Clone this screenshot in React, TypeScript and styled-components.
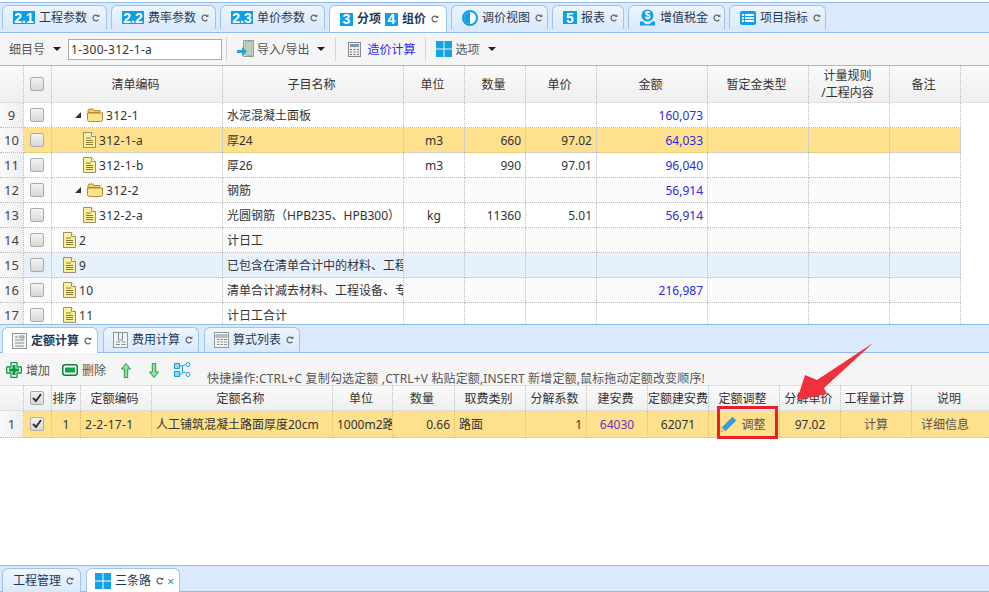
import React from "react";
import styled, { createGlobalStyle } from "styled-components";

const Global = createGlobalStyle`
  html, body { margin: 0; padding: 0; background: #fff; }
  body { font-family: "Noto Sans", "Noto Sans CJK SC", sans-serif; font-size: 12px; color: #333; }
  * { box-sizing: border-box; }
`;

const Page = styled.div`
  position: relative; width: 989px; height: 592px; overflow: hidden;
  display: flex; flex-direction: column; background: #fff;
`;
const TabStrip = styled.div<{ $h: number; $gap?: number }>`
  height: ${p => p.$h}px; flex: none; display: flex; gap: ${p => p.$gap ?? 4}px; padding: 2px 0 0 2px;
  background: #daeafc; border-top: 1px solid #8fbcec; border-bottom: 1px solid #8fbcec;
`;
const TopMargin = styled.div` height: 2px; flex: none; background: #fff; `;
const Tab = styled.div<{ $w: number; $active?: boolean; $h?: number; $pl?: number; $plain?: boolean }>`
  width: ${p => p.$w}px; flex: none; display: flex; align-items: center; gap: 4px; padding-left: ${p => p.$pl ?? 10}px;
  height: ${p => p.$h ?? 24}px; border: 1px solid #9cc4ee; border-bottom: none; border-radius: 6px 6px 0 0;
  background: ${p => (p.$active ? "#fff" : "linear-gradient(#eef5fd,#d9e9fb)")};
  color: #1f3a58; font-weight: ${p => (p.$active && !p.$plain ? 700 : 400)}; white-space: nowrap; line-height: 14px;
`;
const Badge = styled.span<{ $w?: number }>`
  display: inline-flex; align-items: center; justify-content: center; flex: none;
  width: ${p => p.$w ?? 13}px; height: 13px; background: #0ea0e4; color: #fff;
  font: 700 14px "Liberation Sans", sans-serif;
`;
const Toolbar = styled.div<{ $h: number }>`
  height: ${p => p.$h}px; flex: none; display: flex; align-items: center; background: #f5f5f5; color: #555;
  border-bottom: 1px solid #8fbcec;
`;
const Label = styled.span<{ $ml?: number; $color?: string }>`
  margin-left: ${p => p.$ml ?? 0}px; color: ${p => p.$color ?? "#555"}; white-space: nowrap; flex: none;
`;
const Caret = styled.span<{ $ml: number }>`
  margin-left: ${p => p.$ml}px; width: 0; height: 0; flex: none;
  border-left: 4px solid transparent; border-right: 4px solid transparent; border-top: 4px solid #222;
`;
const CodeInput = styled.div`
  margin-left: 7px; width: 154px; height: 21px; flex: none; border: 1px solid #aaa; background: #fff;
  padding-left: 2px; line-height: 19px; color: #333; font-size: 12px; letter-spacing: .3px;
`;
const Sep = styled.span<{ $ml: number }>`
  margin-left: ${p => p.$ml}px; width: 1px; height: 24px; background: #d4d4d4; flex: none;
`;
const IconSlot = styled.span<{ $ml: number }>`
  margin-left: ${p => p.$ml}px; display: inline-flex; flex: none;
`;
const GridBox = styled.div<{ $h: number }>`
  height: ${p => p.$h}px; flex: none; overflow: hidden;
`;
const Table = styled.table`
  table-layout: fixed; border-collapse: separate; border-spacing: 0; width: 989px; font-size: 12px;
`;
const Col = styled.col<{ $w: number }>` width: ${p => p.$w}px; `;
const Th = styled.th<{ $h: number; $bare?: boolean }>`
  height: ${p => p.$h}px; padding: 0 3px 0 0; font-weight: 400; color: #333; text-align: center; line-height: 17px;
  background: linear-gradient(#fafafa, #efefef);
  border-bottom: 1px solid #ddd; border-right: ${p => (p.$bare ? "none" : "1px dotted #bbb")}; white-space: nowrap; overflow: hidden;
`;
const Td = styled.td<{ $h: number; $bg?: string; $align?: string; $color?: string; $bare?: boolean }>`
  height: ${p => p.$h}px; padding: 0 4px; background: ${p => p.$bg ?? "#fff"};
  text-align: ${p => p.$align ?? "left"}; color: ${p => p.$color ?? "#333"};
  border-right: ${p => (p.$bare ? "none" : "1px dotted #bbb")}; border-bottom: ${p => (p.$bare ? "none" : "1px dotted #bbb")};
  white-space: nowrap; overflow: hidden;
`;
const NumTd = styled(Td)`
  background: linear-gradient(90deg,#fafafa,#eeeeee); text-align: center; padding: 0; font-size: 13px; color: #444;
`;
const CheckTd = styled(Td)` padding: 0 0 0 6px; `;
const InfoTd = styled(Td)` padding: 0 0 0 9px; border-right: none; `;
const CodeText = styled.span` letter-spacing: .3px; `;
const Check = styled.span`
  display: block; width: 14px; height: 14px; border: 1px solid #aaa; border-radius: 2px;
  background: linear-gradient(#f4f4f4,#d8d8d8); position: relative;
`;
const Tree = styled.div<{ $pl: number }>`
  display: flex; align-items: center; padding-left: ${p => p.$pl}px; gap: 3px; height: 16px;
`;
const Arrowhead = styled.span`
  width: 0; height: 0; border-left: 6px solid transparent; border-bottom: 6px solid #333; margin-right: 3px; flex: none;
`;
const HintRow = styled(Toolbar)` border-bottom: 1px solid #ddd; padding-top: 2px; position: relative; `;
const Hint = styled.span`
  position: absolute; left: 207px; top: 18px; color: #555; white-space: nowrap; line-height: 16px; font-size: 12px; letter-spacing: .15px;
`;
const Blank = styled.div` flex: 1; background: #fff; `;
const AdjustCell = styled.div` display: flex; align-items: center; justify-content: center; gap: 4px; color: #555; padding-right: 2px; `;
const Mark = styled.div`
  position: absolute; left: 717px; top: 406px; width: 61px; height: 33px; border: 3px solid #e8202a; pointer-events: none;
`;
const ArrowOverlay = styled.svg` position: absolute; left: 0; top: 0; pointer-events: none; `;
const TabClose = styled.span` color: #4f7fb5; font-size: 13px; margin-left: -1px; line-height: 12px; `;
const Ico = styled.svg` flex: none; `;
const RefreshIco = styled(Ico)` margin-left: 1px; `;
const DownIco = styled(Ico)<{ $down?: boolean }>` transform: ${p => (p.$down ? "rotate(180deg)" : "none")}; `;
const HeadCheck = styled.div` padding-left: 6px; `;
const Tick = styled.svg` position: absolute; left: 1px; top: 1px; `;

const Refresh = () => (
  <RefreshIco width="8" height="8" viewBox="0 0 8 8">
    <path d="M6.3 5.6A2.9 2.9 0 1 1 5.9 1.8" fill="none" stroke="#666" strokeWidth="1.3" />
    <path d="M4.4 2.9h3v-2.6z" fill="#666" />
  </RefreshIco>
);
const Note = () => (
  <Ico width="13" height="16" viewBox="0 0 13 16">
    <path d="M.5.5h8l4 4v11H.5z" fill="#fdf09a" stroke="#9a8f70" />
    <path d="M8.5.5v4h4" fill="#fff" stroke="#9a8f70" />
    <path d="M3 6h5M3 8.5h7M3 10.5h7M3 12.5h7" stroke="#8a7a3a" />
  </Ico>
);
const Folder = () => (
  <Ico width="16" height="14" viewBox="0 0 16 14">
    <path d="M1 2.5l1-1.5h4l1 1.5h6v2H1z" fill="#f3cd63" stroke="#b88a2a" />
    <path d="M.5 5h15v6.5a2 2 0 0 1-2 2h-11a2 2 0 0 1-2-2z" fill="#fbe38a" stroke="#b88a2a" />
  </Ico>
);
const Win = () => (
  <Ico width="16" height="16" viewBox="0 0 16 16">
    <path d="M0 0h7.5v7.5H0zM8.5 0H16v7.5H8.5zM0 8.5h7.5V16H0zM8.5 8.5H16V16H8.5z" fill="#10a3e6" />
  </Ico>
);
const HalfCircle = () => (
  <Ico width="16" height="16" viewBox="0 0 16 16">
    <circle cx="8" cy="8" r="7" fill="#fff" stroke="#0ea0e4" strokeWidth="2" />
    <path d="M8 2a6 6 0 0 0 0 12z" fill="#0ea0e4" />
    <path d="M8 3.5a4.5 4.5 0 0 1 0 9z" fill="#fff" />
  </Ico>
);
const Coin = () => (
  <Ico width="17" height="17" viewBox="0 0 17 17">
    <circle cx="8.5" cy="6.5" r="6" fill="#0ea0e4" />
    <text x="8.5" y="10" textAnchor="middle" fontSize="10" fontWeight="700" fill="#fff" fontFamily="Liberation Sans">$</text>
    <path d="M1 12.5h3a5 5 0 0 0 9 0h3v4H1z" fill="#0ea0e4" />
  </Ico>
);
const ListIcon = () => (
  <Ico width="16" height="14" viewBox="0 0 16 14">
    <rect width="16" height="14" rx="2" fill="#0ea0e4" />
    <path d="M2 3h2v2H2zM5 3h9v2H5zM2 6h2v2H2zM5 6h9v2H5zM2 9h2v2H2zM5 9h9v2H5z" fill="#fff" />
  </Ico>
);
const DoorIcon = () => (
  <Ico width="19" height="18" viewBox="0 0 19 18">
    <path d="M6.5.5h10v16h-10z" fill="#e8f0e8" stroke="#8aa096" />
    <path d="M8 2l7-1v15l-7-1z" fill="#bcd0c4" stroke="#7f9588" strokeWidth=".6" />
    <path d="M0 10h5V7l5 4.5L5 16v-3H0z" fill="#27a3e2" />
  </Ico>
);
const CalcIcon = () => (
  <Ico width="13" height="15" viewBox="0 0 13 15">
    <rect x=".5" y=".5" width="12" height="14" fill="#eee" stroke="#8a8a8a" />
    <rect x="2" y="2" width="9" height="3" fill="#7d95ad" />
    <path d="M2 7h2v1H2zM5.5 7h2v1h-2zM9 7h2v1H9zM2 9.5h2v1H2zM5.5 9.5h2v1h-2zM9 9.5h2v1H9zM2 12h2v1H2zM5.5 12h2v1h-2z" fill="#777" />
    <path d="M9 12h2v1H9z" fill="#d8543c" />
  </Ico>
);
const PageTabIcon = ({ kind }: { kind: number }) => (
  <Ico width="15" height="16" viewBox="0 0 15 16">
    <rect x=".5" y=".5" width="14" height="15" fill="#f2f4f3" stroke="#8f9a96" />
    {kind === 0 && <path d="M3 4h3M3 7h9M3 10h9M3 13h9M8 3h4v2H8z" stroke="#7f8f8a" fill="none" />}
    {kind === 1 && <path d="M5.5 1v7h4V1M3 10h4M8.5 10h4M3 12.5h4M8.5 12.5h4" stroke="#7f8f8a" fill="none" />}
    {kind === 2 && <path d="M2 3h11v2H2zM3 7.5h2.5M6.5 7.5h2.5M10 7.5h3M3 10h2.5M6.5 10h2.5M10 10h3M3 12.5h2.5M6.5 12.5h2.5M10 12.5h3" stroke="#7f8f8a" fill="none" />}
  </Ico>
);
const PlusIcon = () => (
  <Ico width="16" height="16" viewBox="0 0 16 16">
    <path d="M5 .7h6v4.3h4.3v6H11v4.3H5V11H.7V5H5z" fill="#e8fbee" stroke="#169a4a" strokeWidth="1.3" strokeLinejoin="round" />
    <path d="M6.5 3h3v3.5H13v3H9.5V13h-3V9.5H3v-3h3.5z" fill="#0f9a46" />
  </Ico>
);
const MinusIcon = () => (
  <Ico width="16" height="12" viewBox="0 0 16 12">
    <rect x=".75" y=".75" width="14.5" height="10.5" rx="2.5" fill="#eafff0" stroke="#12803f" strokeWidth="1.5" />
    <rect x="3" y="3.5" width="10" height="5" fill="#12a34c" />
  </Ico>
);
const UpIcon = ({ down }: { down?: boolean }) => (
  <DownIco $down={down} width="10" height="15" viewBox="0 0 10 15">
    <path d="M5 .5L9.5 6H6.7v8.5H3.3V6H.5z" fill="#8fe0a0" stroke="#2f9a50" strokeLinejoin="round" />
  </DownIco>
);
const TreeIcon = () => (
  <Ico width="17" height="16" viewBox="0 0 17 16">
    <path d="M.5 1.5h5v5h-5zM.5 9.5h5v5h-5z" fill="#8ed6f5" stroke="#10a0e0" />
    <circle cx="14" cy="2.5" r="2" fill="#fff" stroke="#10a0e0" />
    <circle cx="14" cy="12.5" r="2" fill="#fff" stroke="#10a0e0" />
    <path d="M5.5 4h3v6.5h3M8.5 4l3-1.5M5.5 12h3" stroke="#10a0e0" fill="none" />
  </Ico>
);
const Pencil = () => (
  <Ico width="17" height="17" viewBox="0 0 17 17">
    <path d="M12.5 1.2l3.3 3.3L5.5 14.8 2.2 11.5z" fill="#2a9fe6" stroke="#1a7cc0" strokeWidth=".6" />
    <path d="M2.2 11.5l3.3 3.3L.8 16.2z" fill="#e8b888" />
    <path d="M.8 16.2l1-.4-.6-.6z" fill="#333" />
  </Ico>
);
const CheckBox = ({ on }: { on?: boolean }) => (
  <Check>
    {on && (
      <Tick width="10" height="10" viewBox="0 0 10 10">
        <path d="M1 5l3 3 5-7" fill="none" stroke="#333" strokeWidth="2" />
      </Tick>
    )}
  </Check>
);
const HeadCheckBox = ({ on }: { on?: boolean }) => <HeadCheck><CheckBox on={on} /></HeadCheck>;

const topCols = [24, 28, 171, 181, 61, 61, 71, 111, 101, 81, 71, 28];
const botCols = [24, 28, 29, 71, 181, 60, 62, 71, 61, 61, 61, 71, 61, 71, 77];

type R = { n: number; tree: "folder" | "note"; pl: number; code: string; name: string; unit?: string; qty?: string; price?: string; total?: string; bg?: string };
const rows: R[] = [
  { n: 9, tree: "folder", pl: 19, code: "312-1", name: "水泥混凝土面板", total: "160,073" },
  { n: 10, tree: "note", pl: 27, code: "312-1-a", name: "厚24", unit: "m3", qty: "660", price: "97.02", total: "64,033", bg: "#ffe08c" },
  { n: 11, tree: "note", pl: 27, code: "312-1-b", name: "厚26", unit: "m3", qty: "990", price: "97.01", total: "96,040" },
  { n: 12, tree: "folder", pl: 19, code: "312-2", name: "钢筋", total: "56,914", bg: "#fafafa" },
  { n: 13, tree: "note", pl: 27, code: "312-2-a", name: "光圆钢筋（HPB235、HPB300）", unit: "kg", qty: "11360", price: "5.01", total: "56,914" },
  { n: 14, tree: "note", pl: 7, code: "2", name: "计日工", bg: "#fafafa" },
  { n: 15, tree: "note", pl: 7, code: "9", name: "已包含在清单合计中的材料、工程设备、专业工程暂估价", bg: "#e6f1fd" },
  { n: 16, tree: "note", pl: 7, code: "10", name: "清单合计减去材料、工程设备、专业工程暂估价", total: "216,987", bg: "#fafafa" },
  { n: 17, tree: "note", pl: 7, code: "11", name: "计日工合计" },
];
const topHead = ["", "", "清单编码", "子目名称", "单位", "数量", "单价", "金额", "暂定金类型", "", "备注", ""];
const botHead = ["", "", "排序", "定额编码", "定额名称", "单位", "数量", "取费类别", "分解系数", "建安费", "定额建安费", "定额调整", "分解单价", "工程量计算", "说明"];

const Colgroup = ({ cols }: { cols: number[] }) => (
  <colgroup>{cols.map((w, i) => <Col key={i} $w={w} />)}</colgroup>
);
const Y = "#ffe08c";
const BLUE = "#2a2ae6";

export default function App() {
  return (
    <Page>
      <Global />
      <TopMargin />
      <TabStrip $h={31}>
        <Tab $w={105}><Badge $w={22}>2.1</Badge>工程参数<Refresh /></Tab>
        <Tab $w={105}><Badge $w={22}>2.2</Badge>费率参数<Refresh /></Tab>
        <Tab $w={105}><Badge $w={22}>2.3</Badge>单价参数<Refresh /></Tab>
        <Tab $w={118} $active $h={27}><Badge>3</Badge>分项<Badge>4</Badge>组价<Refresh /></Tab>
        <Tab $w={97}><HalfCircle />调价视图<Refresh /></Tab>
        <Tab $w={72}><Badge $w={14}>5</Badge>报表<Refresh /></Tab>
        <Tab $w={97}><Coin />增值税金<Refresh /></Tab>
        <Tab $w={97}><ListIcon />项目指标<Refresh /></Tab>
      </TabStrip>
      <Toolbar $h={33}>
        <Label $ml={9}>细目号</Label>
        <Caret $ml={8} />
        <CodeInput>1-300-312-1-a</CodeInput>
        <Sep $ml={4} />
        <IconSlot $ml={10}><DoorIcon /></IconSlot>
        <Label $ml={1}>导入/导出</Label>
        <Caret $ml={8} />
        <Sep $ml={10} />
        <IconSlot $ml={12}><CalcIcon /></IconSlot>
        <Label $ml={6} $color={BLUE}>造价计算</Label>
        <Sep $ml={9} />
        <IconSlot $ml={10}><Win /></IconSlot>
        <Label $ml={4}>选项</Label>
        <Caret $ml={8} />
      </Toolbar>
      <Table>
        <Colgroup cols={topCols} />
        <thead>
          <tr>
            {topHead.map((h, i) => (
              <Th key={i} $h={37} $bare={i === 11}>
                {i === 1 ? <HeadCheckBox /> : i === 9 ? <>计量规则<br />/工程内容</> : h}
              </Th>
            ))}
          </tr>
        </thead>
      </Table>
      <GridBox $h={221}>
        <Table>
          <Colgroup cols={topCols} />
          <tbody>
            {rows.map(r => (
              <tr key={r.n}>
                <NumTd $h={25}>{r.n}</NumTd>
                <CheckTd $h={25} $bg={r.bg}><CheckBox /></CheckTd>
                <Td $h={25} $bg={r.bg}>
                  <Tree $pl={r.pl}>
                    {r.tree === "folder" ? <><Arrowhead /><Folder /></> : <Note />}
                    <CodeText>{r.code}</CodeText>
                  </Tree>
                </Td>
                <Td $h={25} $bg={r.bg}>{r.name}</Td>
                <Td $h={25} $bg={r.bg} $align="center">{r.unit}</Td>
                <Td $h={25} $bg={r.bg} $align="right">{r.qty}</Td>
                <Td $h={25} $bg={r.bg} $align="right">{r.price}</Td>
                <Td $h={25} $bg={r.bg} $align="right" $color={BLUE}>{r.total}</Td>
                <Td $h={25} $bg={r.bg} />
                <Td $h={25} $bg={r.bg} />
                <Td $h={25} $bg={r.bg} />
                <Td $h={25} $bare />
              </tr>
            ))}
          </tbody>
        </Table>
      </GridBox>
      <TabStrip $h={29} $gap={5}>
        <Tab $w={96} $active $h={26} $pl={9}><PageTabIcon kind={0} />定额计算<Refresh /></Tab>
        <Tab $w={96} $h={25} $pl={9}><PageTabIcon kind={1} />费用计算<Refresh /></Tab>
        <Tab $w={96} $h={25} $pl={9}><PageTabIcon kind={2} />算式列表<Refresh /></Tab>
      </TabStrip>
      <HintRow $h={33}>
        <IconSlot $ml={6}><PlusIcon /></IconSlot>
        <Label $ml={4}>增加</Label>
        <IconSlot $ml={12}><MinusIcon /></IconSlot>
        <Label $ml={4}>删除</Label>
        <IconSlot $ml={15}><UpIcon /></IconSlot>
        <IconSlot $ml={18}><UpIcon down /></IconSlot>
        <IconSlot $ml={15}><TreeIcon /></IconSlot>
        <Hint>快捷操作:CTRL+C 复制勾选定额 ,CTRL+V 粘贴定额,INSERT 新增定额,鼠标拖动定额改变顺序!</Hint>
      </HintRow>
      <Table>
        <Colgroup cols={botCols} />
        <thead>
          <tr>
            {botHead.map((h, i) => (
              <Th key={i} $h={25} $bare={i === 14}>{i === 1 ? <HeadCheckBox on /> : h}</Th>
            ))}
          </tr>
        </thead>
        <tbody>
          <tr>
            <NumTd $h={27}>1</NumTd>
            <CheckTd $h={27} $bg={Y}><CheckBox on /></CheckTd>
            <Td $h={27} $bg={Y} $align="center">1</Td>
            <Td $h={27} $bg={Y}><CodeText>2-2-17-1</CodeText></Td>
            <Td $h={27} $bg={Y}>人工铺筑混凝土路面厚度20cm</Td>
            <Td $h={27} $bg={Y}>1000m2路面</Td>
            <Td $h={27} $bg={Y} $align="right">0.66</Td>
            <Td $h={27} $bg={Y}>路面</Td>
            <Td $h={27} $bg={Y} $align="right">1</Td>
            <Td $h={27} $bg={Y} $align="center" $color="#6a30c0">64030</Td>
            <Td $h={27} $bg={Y} $align="center">62071</Td>
            <Td $h={27} $bg={Y}><AdjustCell><Pencil />调整</AdjustCell></Td>
            <Td $h={27} $bg={Y} $align="center">97.02</Td>
            <Td $h={27} $bg={Y} $align="center" $color="#555">计算</Td>
            <InfoTd $h={27} $bg={Y} $color="#555">详细信息</InfoTd>
          </tr>
        </tbody>
      </Table>
      <Blank />
      <TabStrip $h={27} $gap={5}>
        <Tab $w={79} $h={24}>工程管理<Refresh /></Tab>
        <Tab $w={94} $active $plain $h={24} $pl={8}><Win />三条路<Refresh /><TabClose>×</TabClose></Tab>
      </TabStrip>
      <Mark />
      <ArrowOverlay width="989" height="592" viewBox="0 0 989 592">
        <path d="M797 400L805 375L817 380L873 343L824 388L827 394z" fill="#f0303a" />
      </ArrowOverlay>
    </Page>
  );
}
